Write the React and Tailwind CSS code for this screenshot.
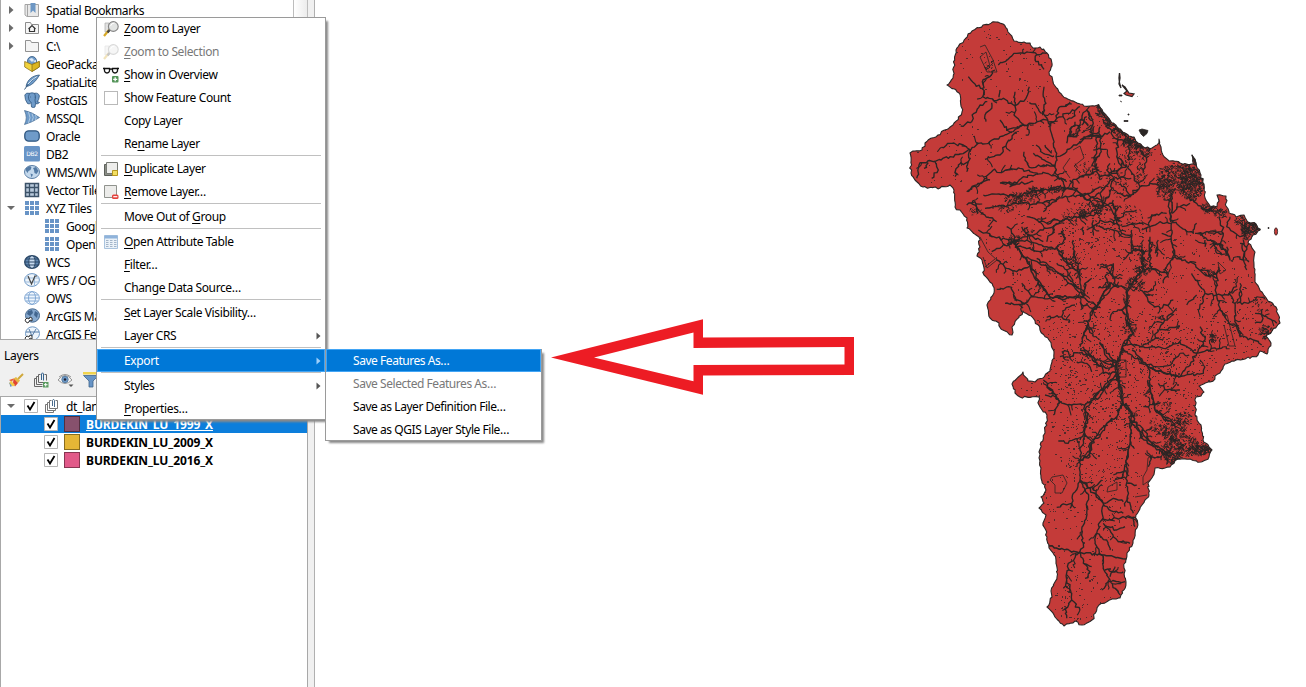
import React from "react";

/* ---------- map geometry ---------- */

function makeRandom(seed) {
  let s = seed;
  return () => {
    s = (s * 1664525 + 1013904223) % 4294967296;
    return s / 4294967296;
  };
}

const parse = (text) => text.trim().split(/\s+/).map((p) => p.split(",").map(Number));

function roughen(points, random, amount) {
  const out = [points[0]];
  for (let i = 1; i < points.length; i++) {
    const [ax, ay] = points[i - 1];
    const [bx, by] = points[i];
    const n = Math.max(1, Math.round(Math.hypot(bx - ax, by - ay) / 2.6));
    for (let k = 1; k <= n; k++) {
      const last = k === n;
      out.push([
        ax + ((bx - ax) * k) / n + (last ? 0 : (random() - 0.5) * amount),
        ay + ((by - ay) * k) / n + (last ? 0 : (random() - 0.5) * amount),
      ]);
    }
  }
  return out;
}

const toPath = (pts) => "M" + pts.map(([x, y]) => x.toFixed(1) + " " + y.toFixed(1)).join("L");

const OUTLINE = `996,22 1003,24 1008,32 1014,41 1024,42 1030,43 1033,48 1040,47 1047,53 1051,59 1052,66 1049,72 1053,82
1059,92 1066,98 1075,102 1084,106 1090,106 1098,105 1103,112 1110,120 1117,127 1125,133 1134,137 1138,143 1145,148
1152,148 1157,145 1159,139 1161,147 1163,155 1169,161 1180,163 1195,165 1192,155 1196,163 1200,173 1204,184 1205,198
1210,206 1217,207 1219,201 1217,195 1226,196 1226,206 1229,213 1236,217 1244,215 1248,222 1256,224 1260,230 1253,235
1248,243 1255,252 1254,265 1255,282 1262,292 1268,301 1276,307 1280,323 1272,331 1266,336 1271,343 1267,354 1260,351
1258,355 1245,359 1232,361 1225,364 1220,373 1210,382 1199,386 1204,392 1201,396 1196,397 1195,415 1201,425 1203,440
1212,450 1209,457 1201,462 1190,459 1178,459 1170,467 1155,468 1153,476 1148,483 1149,495 1142,505 1136,515 1137,528
1133,543 1127,553 1124,568 1126,582 1120,598 1108,601 1099,605 1092,620 1082,625 1075,621 1064,626 1055,617 1047,607
1052,597 1051,591 1057,577 1056,560 1049,548 1047,537 1043,523 1046,515 1039,508 1044,503 1041,497 1046,490 1041,478
1041,468 1039,452 1045,433 1047,415 1039,405 1039,397 1020,397 1015,393 1012,384 1023,372 1028,381 1035,382 1050,371
1052,362 1054,353 1049,340 1040,330 1033,318 1023,311 1012,327 1012,335 1001,329 999,323 990,318 987,305 994,293
993,286 984,275 982,260 977,256 980,247 979,237 967,228 967,218 955,207 954,190 950,185 940,188 923,187 915,180
911,173 910,153 915,151 922,150 925,143 938,135 953,125 962,112 959,93 947,85 953,78 956,50 972,31 983,25 996,22`;

/* River courses, drawn sheet by sheet: [left, top, courses], three units to a pixel. */
const SHEETS = [
  [900, 10, `295,165 320,150 350,130 380,126 410,134 440,130|410,134 408,155 425,165 432,178
|285,180 270,200 250,208 248,260 268,265 290,272 310,265 325,280 345,288|250,235 225,222 205,200
|262,275 240,285 222,310 215,335 182,348|275,278 270,300 255,315 258,335|345,245 345,288 342,315 360,335 368,345
|388,230 378,265 345,288|300,240 297,262|300,330 320,360 368,345 400,340 430,328 445,335
|388,278 410,290 430,310 450,345 460,400 468,440 465,490 490,515 497,535|432,230 430,260 438,280 430,310
|368,345 340,365 300,380 265,400 235,400 212,420 180,432 150,440 100,455 60,458 50,505
|212,420 190,405 150,400 125,412|105,455 115,480 95,505|85,458 72,475|212,420 205,455 175,465 165,500|205,455 200,485
|350,365 320,400 300,435 265,440 255,448|350,350 385,345 388,370|445,350 470,325 500,310 540,290
|470,325 480,290 515,282|500,330 520,320 525,300|408,405 430,430 462,438|400,430 440,455 465,465
|372,425 375,450 388,472 430,465 465,470|435,405 455,430
|205,545 240,520 280,480 310,485 360,475 400,488 440,490 470,500 500,515|300,518 350,520 330,530 370,500 410,492
|470,440 500,425 530,405 560,380 598,365|540,345 530,380 510,380 515,350|560,320 545,345|515,515 540,500 575,490 598,480
|500,535 540,550 560,570 598,548|440,540 480,530 520,538|500,400 510,370 525,335|580,330 560,300 540,330 565,345
|590,380 590,430 575,470`],
  [900, 180, `200,35 230,15 270,0|215,70 240,95 290,125|250,45 310,42 360,50 400,30 450,30 500,25
|255,85 310,78 350,70 400,72 450,62 500,50 540,45 560,60 600,85 640,70|380,110 440,130 500,115 550,105 600,85
|235,150 280,170 340,185 380,170 430,150 480,125|340,185 380,180 410,190 440,200 470,205 490,240 520,265 535,275
|470,205 490,185 490,150|440,185 470,130|340,185 300,205 275,215|365,140 385,165 430,185
|340,190 380,240 400,270 415,300 430,330 450,352 500,355 550,352|350,200 420,215 470,200
|380,230 430,255 490,290 540,340|410,235 450,260 500,290 530,320|470,250 500,270 530,325|535,275 540,310 550,352
|575,295 555,310 550,352|520,180 525,230 540,275|290,240 320,265 350,275 385,262
|290,328 335,322 345,360 375,370 400,350 450,355|315,370 375,372|365,310 380,330 400,350
|550,352 590,378 640,320 660,318|590,378 570,400 565,430 548,475|565,430 580,460|525,375 495,390 485,410 440,412
|485,410 510,425|620,260 640,290 650,320|620,260 600,262|640,250 640,290
|485,515 505,515 510,530 530,518 570,525 590,550 620,565 650,555|480,530 500,530|600,485 620,530 650,555|550,500 570,525
|530,545 560,550 575,575|430,600 450,625 470,650|660,590 620,620 595,640 585,660|580,120 580,165
|560,150 600,120 650,130|640,0 630,40 600,85|655,80 640,130|510,0 530,30 550,50 600,20|200,75 225,65 235,100
|300,10 350,12 400,5|430,95 440,80 470,60|320,140 345,170 335,190`],
  [1080, 60, `60,200 60,280 45,310 60,360|0,240 30,225 60,230 90,215|40,270 80,268|0,350 30,345 50,310
|60,350 110,340 125,320 110,290 115,230|0,400 40,410 70,430 60,400 90,360 130,350|70,430 90,440 110,480 125,520
|100,420 105,460|110,480 140,455 170,450|125,500 160,490 190,495|110,290 150,330 180,380 150,405 120,370
|180,380 210,370 240,380|175,390 150,410 110,400|150,300 145,240|190,340 200,300 180,270
|275,400 265,440 275,490 280,600|275,480 300,500 340,520 350,490|275,490 240,485 210,500 185,510|275,460 300,440 330,430
|260,460 215,465 205,490|275,530 245,520|320,410 350,430 380,450 400,440|350,520 400,545 440,575 450,600
|345,520 380,515 430,520|400,545 410,580|420,470 430,520 420,560|450,470 440,500 480,530 510,520
|155,530 160,570 130,600|210,530 215,570 205,600|230,560 230,590|160,570 190,570|480,550 500,560 490,600
|0,470 30,465 60,460|10,500 10,525|60,500 100,510 130,530|155,510 155,530 125,520|20,150 40,190 30,220
|60,150 90,190 140,230 180,260|70,180 100,230 140,250|90,310 80,330 100,350`],
  [1080, 240, `155,0 155,25 185,35 190,85 160,125 140,150 140,200 140,250 160,280 130,310 125,340 105,380 115,420 125,450 130,490 155,520 150,600 145,650 130,700
|190,85 240,95 265,100 250,130|205,0 210,50 215,85 240,95|235,0 225,40|275,0 285,50 340,70 375,105 410,115|285,50 250,90
|335,100 355,130 375,160 410,165 445,165 470,140|375,160 355,210|350,165 320,195|410,165 410,110 415,80
|410,165 420,210 440,240 470,260 480,290 520,300 545,315|445,160 465,190 465,240 485,290|470,190 505,190 530,170
|480,130 480,190|525,220 560,230 590,250|525,250 545,245 545,210|375,20 375,0|440,20 450,60 420,10|490,0 490,60 470,50
|490,60 500,90|130,310 180,320 220,300 250,250 290,205|180,320 250,325 300,305 350,340 375,300 360,260|250,250 230,245
|240,270 300,260|350,340 325,380 300,410 245,395 205,380 155,345 130,330|350,340 380,330 430,320|300,410 370,400 375,380
|200,375 240,380 275,370 300,340|205,380 210,440 220,480 225,510 260,540 290,560|235,430 260,450 300,450
|90,130 60,180 40,210 20,260 0,320|90,130 140,145|40,210 0,185|55,145 90,140 75,110 100,80 60,75|90,240 100,215 140,205
|20,260 40,290|0,330 40,350 60,360 100,375|60,310 90,350 110,370|110,400 80,430 50,460 20,500 20,560 0,600
|110,400 70,400 60,370|125,490 110,530 80,550 60,590 30,610 30,640 0,660|155,540 190,570 220,610 250,630 270,650
|180,150 210,190 240,205 280,180|190,160 220,150|150,240 130,220|190,500 240,490|205,680 215,650 245,650`],
  [1000, 380, `130,10 150,30 180,65 215,75 255,75 300,50 330,10|135,45 165,50 180,65 160,105
|255,75 255,130 250,180 240,210 240,260 240,300 262,340 260,400 245,450 250,490 240,515 205,550 200,600 215,640 215,660 195,685 200,715
|215,660 240,690|240,515 250,550 270,575 255,595|250,550 275,560|200,600 190,625|240,300 220,340 215,370 170,382
|215,370 210,385|335,115 300,150 275,190 270,230 240,240|175,183 205,190 250,165|350,120 360,85 380,70
|360,0 365,60 390,90 390,170 380,230 380,290 382,350 400,400|340,285 375,270|345,300 370,285|382,310 410,315|382,350 375,380
|395,125 430,165 460,200 500,225|445,0 460,60 465,90 500,120
|240,300 280,330 310,370 305,420 290,460 285,490 305,525 310,560 330,600 360,645|310,370 340,355 370,365
|310,370 340,395 370,400|305,420 350,415 400,412 405,440|310,430 340,470 355,485 390,490|310,430 350,450 375,440
|290,460 320,480 330,510|315,570 350,575 370,575|325,605 375,605|330,590 345,560|325,605 305,630|280,330 305,300`],
];

/* Trunk reaches that carry the widest stroke. */
const TRUNKS = `1142,250 1143,270 1133,282 1127,292 1127,322 1133,334 1123,346 1116,367 1118,380 1122,400
|1132,350 1148,367 1162,372 1180,377|1110,283 1100,301 1093,311|1171,193 1171,222
|1046,546 1077,552 1102,555 1126,559|1129,410 1144,440 1158,448|1080,480 1094,493 1103,503
|1013,241 1027,261 1036,280 1050,297 1083,297|1057,248 1067,262 1079,272`;

/* Parcel outlines, thinner than the rivers. */
const PARCELS = `1073,150 1080,146 1084,158 1074,166 1081,173|980,47 985,45 993,60 997,72 987,72 980,57 986,52 990,66
|1052,477 1063,475 1067,483 1062,493 1055,493 1055,485 1050,480 1052,477|1153,455 1148,458 1147,470 1143,477 1143,485 1150,480
|1135,497 1147,495|980,237 988,252 997,260 987,268 983,257|1118,360 1126,360 1126,377 1118,377 1118,360
|1223,315 1227,315 1235,346 1229,346 1224,325|1108,487 1117,482 1117,490 1107,492 1108,487|1218,262 1226,270 1220,274 1218,262
|1210,231 1216,230 1215,234 1208,233 1210,231|985,267 995,259|1070,158 1063,168 1070,178`;

/* Dense ground: x, y, rx, ry, strokes */
const DENSE = [
  [1178, 178, 21, 15, 560], [1192, 184, 12, 17, 420], [1165, 188, 9, 12, 120], [1134, 143, 12, 6, 170], [1120, 132, 8, 5, 80],
  [1143, 150, 8, 9, 110], [1102, 112, 6, 5, 75], [1110, 122, 6, 5, 70], [1129, 158, 5, 10, 45], [1140, 175, 6, 14, 45],
  [1208, 208, 7, 5, 90], [1220, 213, 7, 5, 80], [1250, 228, 9, 7, 230], [1240, 221, 6, 4, 50], [1246, 234, 4, 6, 60],
  [1174, 430, 12, 12, 250], [1173, 451, 11, 13, 340], [1200, 450, 12, 5, 230], [1188, 446, 12, 10, 150], [1183, 418, 10, 6, 70],
  [1156, 426, 8, 9, 60], [1266, 332, 7, 7, 100], [1020, 199, 15, 6, 140], [1034, 192, 9, 5, 90], [1052, 190, 12, 3, 60],
  [1005, 208, 14, 4, 40], [1083, 214, 5, 4, 70], [1015, 240, 7, 5, 55], [1143, 269, 9, 6, 100], [1135, 284, 9, 7, 110],
  [1142, 255, 3, 8, 50], [1127, 300, 3, 9, 40], [1130, 328, 7, 8, 60], [1118, 370, 3, 12, 70], [1213, 337, 3, 5, 50],
  [1211, 274, 6, 3, 45], [975, 212, 8, 4, 30], [1027, 232, 8, 4, 35], [1074, 262, 6, 5, 30], [1095, 205, 8, 5, 30],
  [1083, 168, 9, 9, 20], [1116, 184, 12, 14, 35], [1085, 215, 25, 14, 70], [1160, 318, 5, 2, 20], [1262, 306, 9, 8, 30],
  [1163, 405, 8, 4, 20], [989, 65, 4, 6, 18], [1125, 215, 18, 12, 55], [1098, 182, 12, 12, 35], [1133, 414, 4, 3, 22],
];

/* Speckle: x, y, rx, ry, count */
const SPECKS = [
  [1000, 60, 45, 40, 80], [960, 155, 45, 35, 50], [1060, 110, 60, 50, 80], [1030, 250, 55, 45, 170], [1100, 240, 45, 40, 330],
  [1080, 330, 45, 50, 270], [1120, 370, 60, 60, 420], [1195, 290, 60, 60, 280], [1165, 365, 50, 40, 260], [1100, 440, 40, 50, 260],
  [1070, 540, 45, 70, 120], [1080, 600, 30, 30, 80], [1180, 430, 30, 40, 140], [1235, 340, 35, 30, 130], [1060, 470, 30, 80, 60],
  [1060, 385, 40, 18, 90], [1120, 140, 45, 40, 100], [1120, 500, 25, 45, 70],
];

function buildMap() {
  const random = makeRandom(77);
  const outline = toPath(roughen(parse(OUTLINE), random, 2.2)) + "Z";
  const rivers = [];
  const twigs = [];
  SHEETS.forEach(([left, top, text], sheet) => {
    text.split("|").forEach((course) => {
      const pts = parse(course).map(([x, y]) => [left + x / 3, top + y / 3]);
      const line = roughen(pts, random, 2.9);
      rivers.push(toPath(line));
      const chance = sheet === 0 ? 0.08 : sheet === 4 ? 0.11 : 0.2;
      for (let i = 2; i < line.length; i++) {
        if (random() > chance) continue;
        const [x, y] = line[i];
        const heading = Math.atan2(y - line[i - 1][1], x - line[i - 1][0]) + (random() > 0.5 ? 1 : -1) * (0.6 + random() * 0.7);
        const length = 4 + random() * 7;
        twigs.push(
          toPath(roughen([[x, y], [x + Math.cos(heading) * length, y + Math.sin(heading) * length]], random, 2.6))
        );
      }
    });
  });
  const spot = (x, y, rx, ry) => {
    const a = random() * Math.PI * 2;
    const r = Math.sqrt(random());
    return [x + Math.cos(a) * r * rx, y + Math.sin(a) * r * ry];
  };
  const dense = [];
  DENSE.forEach(([x, y, rx, ry, n]) => {
    for (let i = 0; i < n * 0.85; i++) {
      const [px, py] = spot(x, y, rx, ry);
      dense.push(toPath([[px, py], [px + (random() - 0.5) * 4.5, py + (random() - 0.5) * 4.5]]));
    }
  });
  const specks = [];
  SPECKS.forEach(([x, y, rx, ry, n]) => {
    for (let i = 0; i < n * 0.8; i++) {
      const [px, py] = spot(x, y, rx, ry);
      const w = random() > 0.75 ? 2 : 1;
      const h = random() > 0.88 ? 2 : 1;
      specks.push("M" + Math.round(px) + " " + Math.round(py) + "h" + w + "v" + h + "h-" + w + "z");
    }
  });
  return {
    outline,
    rivers: rivers.join(""),
    twigs: twigs.join(""),
    dense: dense.join(""),
    specks: specks.join(""),
    trunks: TRUNKS.split("|").map((t) => toPath(roughen(parse(t), random, 2.6))).join(""),
    parcels: PARCELS.split("|").map((t) => toPath(parse(t))).join(""),
  };
}

const MAP = buildMap();

function CatchmentMap() {
  return (
    <svg className="block h-[687px] w-[991px]" viewBox="315 0 991 687">
      <defs>
        <clipPath id="catchment">
          <path d={MAP.outline} />
        </clipPath>
      </defs>
      <path
        fill="#ed1c24"
        fillRule="evenodd"
        d="M551 357.500L703 319.300V337.500L854 337V375L703 375.500V394.700ZM594 357.500L693.500 381.300V365L844.500 364.500V347L693.500 348V332.600Z"
      />
      <path d={MAP.outline} fill="#c43b39" />
      <g clipPath="url(#catchment)" fill="none" stroke="#2b2625" strokeLinejoin="round">
        <path d={MAP.specks} fill="#2b2625" fillOpacity="0.75" stroke="none" shapeRendering="crispEdges" />
        <path d={MAP.parcels} strokeWidth="0.8" />
        <path d={MAP.twigs} strokeWidth="1.100" />
        <path d={MAP.rivers} strokeWidth="1.350" />
        <path d={MAP.dense} strokeWidth="1" />
        <path d={MAP.trunks} strokeWidth="1.500" />
      </g>
      <path d={MAP.outline} fill="none" stroke="#2b2625" strokeWidth="1.100" strokeLinejoin="round" />
      <g fill="#2b2625" stroke="#2b2625" strokeWidth="0.8">
        <path d="M1119.500 73L1120 78L1119 84L1121 88L1119.500 83L1119 78Z" strokeWidth="1.300" />
        <path fill="#c43b39" d="M1122 85L1125 87L1127 90L1129 93L1134 94L1132 96.500L1126 95L1124 93.500L1127 91Z" strokeWidth="1.200" />
        <path d="M1119 95h3v1h-3zM1120 101l2 1M1128 114h1v1h-1zM1124 120.500h4v1h-4zM1137 96.500h.5M1268 227.500h1v1h-1z" />
        <path d="M1139 130L1142 129L1148 130.500L1147 133.500L1143.500 136.500L1141 134Z" />
        <path d="M1192 155L1195 159L1196.500 166L1194 162Z" />
        <ellipse cx="1276" cy="231.500" rx="1.600" ry="3.700" fill="#c43b39" />
        <path d="M1097 107l1.500-3 2 4zM1258 228l2.500 1-1 1.500z" />
      </g>
    </svg>
  );
}

/* ---------- icons ---------- */

function Icon({ name }) {
  const shapes = {
    bookmark: (
      <g>
        <path d="M1 2.500h13.500v12H3L1 13z" fill="#e9e9e9" stroke="#a5a5a5" />
        <path d="M3.500 3v11" stroke="#a5a5a5" />
        <path d="M6.500 1h5v10L9 8.500 6.500 11z" fill="#6d97c4" />
      </g>
    ),
    home: (
      <g fill="none" stroke="#8d8d8d">
        <path d="M1.500 13.500v-11h5l1 2h7v9z" fill="#f6f6f6" />
        <path d="M4.500 9L8 5.500 11.500 9M5.500 8.500v3h5v-3" stroke="#333" strokeWidth="1.200" />
      </g>
    ),
    folder: <path d="M1.500 13.500v-11h5l1 2h7v9z" fill="#f4f4f4" stroke="#919191" />,
    geopackage: (
      <g strokeWidth=".8">
        <circle cx="8" cy="5" r="4.500" fill="#6f9bc9" stroke="#2f567f" />
        <path d="M5 3l3-1 2 2-2 2zM9 5l3-1v3z" fill="#dbe8f5" />
        <path d="M.7 5.500L8 8.500l7.300-3v5.500L8 15.500.7 11z" fill="#f2d33c" stroke="#8e741c" />
        <path d="M8 8.500v7L15.300 11V5.500z" fill="#dcb61f" stroke="#8e741c" />
      </g>
    ),
    feather: (
      <g>
        <path d="M15.500 1C9 1.500 3.500 5 2 12.500 7 12 11.500 8 15.500 1z" fill="#6f9bc9" stroke="#34597f" strokeWidth=".8" />
        <path d="M.500 15.500Q4 8.500 13 2.500" stroke="#34597f" fill="none" />
        <path d="M4 10Q7 6 13 2.500" stroke="#dcebf7" fill="none" strokeWidth="1" />
      </g>
    ),
    elephant: (
      <g fill="#6f9bc9" stroke="#2f567f" strokeWidth=".8">
        <path d="M.8 3Q2 .3 5.500 1.300 8 .3 10.500 1.300 14.500.5 15.400 4 15 8 13 10q2-.3 2.500.5-1.500 1.700-4 1.300L11 15q-1.500 1-3.500 0L7 10.500 5.500 12 3.500 11.500Q.8 8 .8 3z" />
        <path d="M5.500 1.300Q3.500 5 5 8l2 2.500M10.500 1.300Q12.500 5 11 8l.5 3.500" fill="none" />
        <path d="M6 5h.8M10 5h.6" />
      </g>
    ),
    mssql: (
      <g>
        <path d="M.5.500Q8 2 15.500 7.500 9 12 .5 14.500 4 8 .5.500z" fill="#6f9bc9" stroke="#456a90" strokeWidth=".7" />
        <path d="M4.500 2q3 6 0 11M8 3.500q2.500 4 0 8M11.500 5q1.500 2 0 5" stroke="#c9dcee" strokeWidth=".7" fill="none" />
      </g>
    ),
    oracle: <rect x=".8" y="2.800" width="14.400" height="10.400" rx="4" fill="#6f9bc9" stroke="#2f567f" strokeWidth="1.300" />,
    db2: (
      <g>
        <rect width="16" height="15.500" rx="1.500" fill="#6894c6" />
        <text x="8" y="10" textAnchor="middle" fontSize="6" fill="#fff" fontFamily="DejaVu Sans">DB2</text>
      </g>
    ),
    wms: (
      <g>
        <ellipse cx="8" cy="8" rx="7.500" ry="6.500" fill="#c3d8ec" stroke="#5b7fa6" />
        <path d="M2 4l4-2 1.500 1.500-1 2.500-2 1-1 2-2-3zM9 4l3-1 2.500 4-2 3-2-1-.5-3zM6.500 9.500l2.500 1-1.500 3z" fill="#547ba5" />
      </g>
    ),
    vector: (
      <g>
        <path d="M1.500 1.500h13v13h-13z" fill="#b7c8da" stroke="#3c5268" strokeWidth="1.500" />
        <path d="M5.500 1v14M10.500 1v14M1 5.500h14M1 10.500h14" stroke="#3c5268" strokeWidth="1.300" />
      </g>
    ),
    tiles: (
      <path fill="#6894c6" d="M1 1h4v4H1zM6 1h4v4H6zM11 1h4v4h-4zM1 6h4v4H1zM6 6h4v4H6zM11 6h4v4h-4zM1 11h4v4H1zM6 11h4v4H6zM11 11h4v4h-4z" />
    ),
    wcs: (
      <g fill="none" stroke="#2c4968">
        <ellipse cx="8" cy="8" rx="7.300" ry="6.300" fill="#6188b2" strokeWidth="1.400" />
        <ellipse cx="8" cy="8" rx="3.200" ry="6.300" fill="#c9dcf0" />
        <path d="M2 5h12M1 8h14M2 11h12" />
      </g>
    ),
    wfs: (
      <g fill="none">
        <ellipse cx="8" cy="8" rx="7.400" ry="6.400" fill="#edf4fb" stroke="#6d97c4" />
        <path d="M1 6h14M1 10h14M10.500 2v12" stroke="#9dbcdc" />
        <path d="M4 4l3.500 8L11 4M11 4h2" stroke="#454545" strokeWidth="1.200" />
      </g>
    ),
    ows: (
      <g fill="none" stroke="#79a2d0" strokeWidth=".9">
        <ellipse cx="8" cy="8" rx="7.400" ry="6.400" fill="#eff6fd" />
        <ellipse cx="8" cy="8" rx="3.500" ry="6.400" />
        <path d="M1.500 5h13M.6 8h14.800M1.500 11h13" />
      </g>
    ),
    arcmap: (
      <g>
        <ellipse cx="8.500" cy="7.500" rx="7" ry="6.700" fill="#86a9cf" stroke="#47698e" />
        <path d="M4 3l4-1 1 3-3 3-3-2zM11 3l3 2-1 5-3-3z" fill="#42668f" />
        <path d="M1 12l2-2 2 1 1-2 2 1v3l-2-1-2 3-2-1z" fill="#fff" stroke="#222" strokeWidth=".9" />
      </g>
    ),
    arcfeat: (
      <g>
        <ellipse cx="8.500" cy="7.500" rx="7" ry="6.700" fill="#edf4fb" stroke="#6d97c4" />
        <path d="M5 3l3 7 4-7M2 6h13" stroke="#557ba5" fill="none" />
        <path d="M1 12l2-2 2 1 1-2 2 1v3l-2-1-2 3-2-1z" fill="#fff" stroke="#222" strokeWidth=".9" />
      </g>
    ),
    group: (
      <g fill="none" stroke="#777" strokeWidth="1">
        <path d="M3.500 6.500h-2v8h8v-2M5.500 4.500h-2v8h8v-2" />
        <path d="M7.500 2.500h-2v8h8v-8h-2" />
        <path d="M8.500 8V2.500q1-2.500 2 0V9" stroke="#496b8c" />
      </g>
    ),
    addgroup: (
      <g fill="none" stroke="#666" strokeWidth="1">
        <path d="M3.500 6.500h-2v8h8M5.500 4.500h-2v8h6" />
        <path d="M7.500 2.500h-2v8h5m3-2v-6h-2" />
        <path d="M8.500 8V2q1-2.500 2 0v6.500" stroke="#35638f" />
        <rect x="10" y="10" width="5.500" height="5.500" fill="#5b9b61" stroke="none" />
        <path d="M11 12.700h3.500M12.700 11v3.500" stroke="#fff" />
      </g>
    ),
    brush: (
      <g>
        <path d="M15 2L10 7" stroke="#d0a83b" strokeWidth="2" />
        <path d="M8 5l4 3.500-2 2.500-5-4z" fill="#e6b942" />
        <path d="M5.500 6.500L10 11l-3 3.500-2-3z" fill="#e04532" />
        <path d="M5.500 6.500L1 8l3 2z" fill="#e85f38" />
        <path d="M3 8.500l4 4.500-2 1.500-4-3z" fill="#f3cb48" />
        <path d="M1 10l3 4-1.500 1z" fill="#5f8fc4" />
      </g>
    ),
    eye: (
      <g fill="none">
        <path d="M0 8q7-9 14 0-7 7-14 0z" fill="#f5f5f5" stroke="#959595" />
        <circle cx="7" cy="7.500" r="3.200" fill="#6c98c5" stroke="#5a7fa5" />
        <circle cx="7" cy="7.500" r="1.200" fill="#223" />
        <path d="M1 5q6-5 12 0" stroke="#959595" />
        <path d="M10.500 12.500h5L13 15z" fill="#555" />
      </g>
    ),
    funnel: (
      <g>
        <path d="M0 0h16v2.500H0z" fill="#f1d44d" />
        <path d="M.5 3.500h15L10 9v6H6V9z" fill="#6894c6" stroke="#40658b" strokeWidth=".8" />
      </g>
    ),
    zoom: (
      <g>
        <path d="M2 2h4v9H2z" fill="#e2e2e2" stroke="#aaa" strokeWidth=".7" />
        <path d="M6 9l-5 6" stroke="#d7a928" strokeWidth="2.200" />
        <path d="M7 8.500L4.500 11.500" stroke="#444" strokeWidth="2.200" />
        <circle cx="10.300" cy="5.500" r="4.900" fill="#e2e4e3" stroke="#858585" strokeWidth="1.100" />
        <path d="M7.500 5q1-3 4-3" stroke="#fff" fill="none" />
      </g>
    ),
    glasses: (
      <g fill="none" stroke="#111" strokeWidth="1.300">
        <path d="M0 1.500h1.500M14.500 1.500H16M6 2.500q2-1 4 0" />
        <path d="M1.500 1.500H6.500V4Q6 6 4 6 2 6 1.500 4zM9.500 1.500h5V4Q14 6 12 6 10 6 9.500 4z" fill="#fff" />
        <rect x="9" y="9" width="6.500" height="6.500" rx="1" fill="#549459" stroke="none" />
        <path d="M10.200 12.300h4M12.200 10.300v4" stroke="#fff" />
      </g>
    ),
    duplicate: (
      <g strokeWidth="1">
        <path d="M1.500 3.500h10v11h-10z" fill="#8b8e87" stroke="#5c5f59" />
        <path d="M3.500 1.500h11v11h-11z" fill="#ededeb" stroke="#777a74" />
        <path d="M9.500 9.500h5v5h-5z" fill="#f3df62" stroke="#b7971e" />
      </g>
    ),
    remove: (
      <g>
        <path d="M1.500 1.500h12v12h-12z" fill="#ececea" stroke="#90938e" />
        <rect x="9" y="10.500" width="6.500" height="4.500" rx="1.500" fill="#e4423d" />
        <path d="M10.300 12.700h4" stroke="#fff" strokeWidth="1.200" />
      </g>
    ),
    table: (
      <g>
        <path d="M1.500 1.500h13v13h-13z" fill="#eaf1f8" stroke="#a9c3de" />
        <path d="M1.500 1.500h13v3h-13z" fill="#8fb3db" />
        <path d="M3 6.500h2.500M3 8.500h2.500M3 10.500h2.500M3 12.500h2.500M7 6.500h2.500M7 8.500h2.500M7 10.500h2.500M7 12.500h2.500M11 6.500h2.500M11 8.500h2.500M11 10.500h2.500M11 12.500h2.500" stroke="#a3b5c9" />
      </g>
    ),
  };
  return (
    <svg className="block size-4 shrink-0" viewBox="0 0 16 16">
      {shapes[name]}
    </svg>
  );
}

function Triangle({ down }) {
  return (
    <svg className="block size-2 shrink-0" viewBox="0 0 8 8">
      <path d={down ? "M0 2h8L4 6z" : "M2 0v8l4.500-4z"} fill="#6b6b6b" />
    </svg>
  );
}

/* ---------- browser and layer panels ---------- */

const BROWSER = [
  ["bookmark", "Spatial Bookmarks", "closed"],
  ["home", "Home", "closed"],
  ["folder", "C:\\", "closed"],
  ["geopackage", "GeoPackage"],
  ["feather", "SpatiaLite"],
  ["elephant", "PostGIS"],
  ["mssql", "MSSQL"],
  ["oracle", "Oracle"],
  ["db2", "DB2"],
  ["wms", "WMS/WMTS"],
  ["vector", "Vector Tiles"],
  ["tiles", "XYZ Tiles", "open"],
  ["tiles", "Google Satellite", "child"],
  ["tiles", "OpenStreetMap", "child"],
  ["wcs", "WCS"],
  ["wfs", "WFS / OGC API"],
  ["ows", "OWS"],
  ["arcmap", "ArcGIS Map Service"],
  ["arcfeat", "ArcGIS Feature"],
];

function BrowserPanel() {
  return (
    <div className="flex h-[340px] w-[308px] border-b border-l border-[#a8a8a8] bg-white">
      <div className="min-w-0 flex-1 overflow-hidden pt-px">
        {BROWSER.map(([icon, label, state], i) => (
          <div key={i} className={"flex h-[18px] items-center whitespace-nowrap " + (state === "child" ? "pl-5" : "")}>
            <span className="flex w-[23px] pl-[6px]">
              {(state === "closed" || state === "open") && <Triangle down={state === "open"} />}
            </span>
            <Icon name={icon} />
            <span className="pl-[6px] pt-[2px] tracking-[-0.4px]">{label}</span>
          </div>
        ))}
      </div>
      <div className="w-[15px] border-x border-[#bdbdbd] bg-linear-to-r from-white to-[#ececec]" />
    </div>
  );
}

function CheckBox() {
  return (
    <svg className="block size-[14px] shrink-0" viewBox="0 0 14 14">
      <path d="M.5.500h13v13H.5z" fill="#fff" stroke="#b5b5b5" />
      <path d="M3.500 6.500L6 10.500 10.500 3" fill="none" stroke="#000" strokeWidth="1.800" />
    </svg>
  );
}

const LAYERS = [
  ["BURDEKIN_LU_1999_X", "bg-[#87516d]", true],
  ["BURDEKIN_LU_2009_X", "bg-[#e5b636]", false],
  ["BURDEKIN_LU_2016_X", "bg-[#e15989]", false],
];

function LayersPanel() {
  return (
    <div className="flex min-h-0 flex-1 flex-col">
      <div className="flex h-8 items-center pl-1">Layers</div>
      <div className="flex h-6 items-start gap-[9px] pl-2">
        <Icon name="brush" />
        <Icon name="addgroup" />
        <Icon name="eye" />
        <Icon name="funnel" />
      </div>
      <div className="w-[308px] flex-1 border-x border-t border-[#a8a8a8] bg-white">
        <div className="flex h-[18px] items-center pl-[6px]">
          <Triangle down />
          <span className="pl-[9px]"><CheckBox /></span>
          <span className="pl-[6px]"><Icon name="group" /></span>
          <span className="whitespace-nowrap pl-[6px] pt-[2px]">dt_landuse</span>
        </div>
        {LAYERS.map(([name, colour, selected]) => (
          <div key={name} className={"flex h-[18px] items-center pl-[43px] font-bold " + (selected ? "bg-[#0c7edb] text-white underline" : "")}>
            <CheckBox />
            <span className={"ml-[6px] size-4 border border-black/40 " + colour} />
            <span className="pl-[6px] pt-[2px] tracking-[-0.1px]">{name}</span>
          </div>
        ))}
      </div>
    </div>
  );
}

/* ---------- context menus ---------- */

const MENU = [
  { text: "&Zoom to Layer", icon: "zoom" },
  { text: "&Zoom to Selection", icon: "zoom", disabled: true },
  { text: "&Show in Overview", icon: "glasses" },
  { text: "Show Feature Count", box: true },
  { text: "Copy Layer" },
  { text: "Re&name Layer" },
  null,
  { text: "&Duplicate Layer", icon: "duplicate" },
  { text: "&Remove Layer…", icon: "remove" },
  null,
  { text: "Move Out of &Group" },
  null,
  { text: "&Open Attribute Table", icon: "table" },
  { text: "&Filter…" },
  { text: "Change Data Source…" },
  null,
  { text: "&Set Layer Scale Visibility…" },
  { text: "Layer CRS", more: true },
  null,
  { text: "Export", more: true, active: true },
  null,
  { text: "Styles", more: true },
  { text: "&Properties…" },
];

const SUBMENU = [
  { text: "Save Features As…", active: true },
  { text: "Save Selected Features As…", disabled: true },
  { text: "Save as Layer Definition File…" },
  { text: "Save as QGIS Layer Style File…" },
];

function Label({ text }) {
  const at = text.indexOf("&");
  if (at < 0) return <span>{text}</span>;
  return (
    <span>
      {text.slice(0, at)}
      <span className="underline underline-offset-2">{text[at + 1]}</span>
      {text.slice(at + 2)}
    </span>
  );
}

function MenuItem({ item }) {
  const tone = item.active
    ? "bg-[#0078d7] text-white shadow-[inset_0_0_0_1px_#42a5f5]"
    : item.disabled
      ? "text-[#787878]"
      : "";
  return (
    <div className={"flex h-[23px] items-center whitespace-nowrap " + tone}>
      <span className="flex w-[27px] shrink-0 pl-[6px]">
        {item.icon && <span className={item.disabled ? "opacity-30" : ""}><Icon name={item.icon} /></span>}
        {item.box && <span className="ml-px size-[14px] border border-[#b9b9b9] bg-white" />}
      </span>
      <Label text={item.text} />
      {item.more && (
        <svg className="ml-auto mr-[2px] block size-2" viewBox="0 0 8 8">
          <path d="M1.500 .500v7L5.500 4z" fill={item.active ? "#9fd0fb" : "#555"} />
        </svg>
      )}
    </div>
  );
}

function Menu({ items, place }) {
  return (
    <div className={"absolute bg-white px-px shadow-[0_0_0_1px_#9a9a9a_inset,3px_3px_2px_-1px_#8a8a8a] " + place}>
      {items.map((item, i) =>
        item ? (
          <MenuItem key={i} item={item} />
        ) : (
          <div key={i} className="mx-1 h-[2px] border-t border-[#c0c0c0]" />
        )
      )}
    </div>
  );
}

export default function App() {
  return (
    <div className="relative flex h-[687px] w-[1306px] overflow-hidden bg-white font-['Noto_Sans','Open_Sans',sans-serif] text-[12px] leading-[18px] tracking-[-0.3px] text-black">
      <div className="flex w-[315px] shrink-0 flex-col border-r border-[#b0b0b0] bg-[#f0f0f0]">
        <BrowserPanel />
        <LayersPanel />
      </div>
      <CatchmentMap />
      <Menu items={MENU} place="left-[96px] top-[17px] w-[230px] tracking-[-0.38px]" />
      <Menu items={SUBMENU} place="left-[325px] top-[349px] w-[217px] tracking-[-0.45px]" />
    </div>
  );
}
